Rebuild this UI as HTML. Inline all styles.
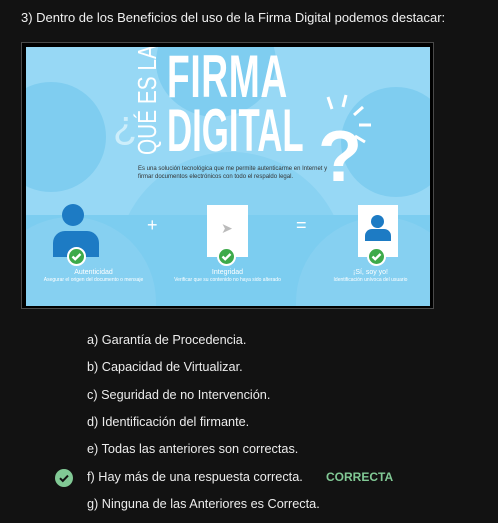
<!DOCTYPE html>
<html><head><meta charset="utf-8"><style>
body{margin:0;width:498px;height:523px;background:#121212;font-family:"Liberation Sans",sans-serif;position:relative;overflow:hidden;color:#e8e8e8}
.a{position:absolute}
.t{left:21px;top:10px;font-size:13px;color:#f0f0f0}
.frame{left:21px;top:42px;width:413px;height:267px;border:1px solid #4a4a4a;background:#000;box-sizing:border-box}
.img{left:26px;top:47px;width:404px;height:259px;background:#97d8f5;overflow:hidden}
.c{position:absolute;border-radius:50%;background:#7fcdf0}
.opt{left:87px;font-size:12.7px;color:#ececec}
.ck{width:19px;height:19px}
</style></head><body>
<div class="a t">3) Dentro de los Beneficios del uso de la Firma Digital podemos destacar:</div>
<div class="a frame"></div>
<div class="a img">
 <div class="c" style="left:-30px;top:35px;width:110px;height:110px"></div>
 <div class="c" style="left:130px;top:-40px;width:120px;height:110px"></div>
 <div class="c" style="left:315px;top:40px;width:110px;height:110px"></div>
 <div class="c" style="left:90px;top:105px;width:230px;height:230px;background:#89d2f2"></div>
 <div class="a" style="left:0;top:168px;width:404px;height:91px;background:#7ccdf0"></div>
 <div class="c" style="left:-40px;top:170px;width:170px;height:170px;background:#86d0f1"></div>
 <div class="c" style="left:270px;top:170px;width:170px;height:170px;background:#86d0f1"></div>
 <div class="a" style="left:141px;top:0px;font-size:60px;font-weight:bold;color:#fff;transform:scaleX(0.62);transform-origin:0 0;letter-spacing:1px;line-height:60px">FIRMA</div>
 <div class="a" style="left:141px;top:56px;font-size:60px;font-weight:bold;color:#fff;transform:scaleX(0.58);transform-origin:0 0;line-height:56px">DIGITAL</div>
 <div class="a" style="left:108px;top:108px;font-size:26px;color:#fff;transform:rotate(-90deg) scaleX(0.8);transform-origin:0 0;white-space:nowrap;line-height:26px">QUÉ ES LA</div>
 <div class="a" style="left:88px;top:60px;font-size:40px;color:#cdeefb;transform:rotate(180deg)">?</div>
 <div class="a" style="left:292px;top:70px;font-size:72px;font-weight:bold;color:#fff;line-height:80px">?</div>
 <svg class="a" style="left:295px;top:40px" width="70" height="70"><g stroke="#fff" stroke-width="3"><line x1="7" y1="10" x2="11" y2="22"/><line x1="25" y1="8" x2="22" y2="20"/><line x1="42" y1="20" x2="33" y2="28"/><line x1="50" y1="38" x2="38" y2="38"/><line x1="44" y1="55" x2="34" y2="49"/></g></svg>
 <div class="a" style="left:112px;top:118px;font-size:6px;color:#333;width:200px;line-height:8px">Es una solución tecnológica que me permite autenticarme en Internet y firmar documentos electrónicos con todo el respaldo legal.</div>
 <div class="a" style="left:36px;top:157px;width:22px;height:22px;border-radius:50%;background:#1d7bc4"></div>
 <div class="a" style="left:27px;top:184px;width:46px;height:26px;border-radius:12px 12px 0 0;background:#1d7bc4"></div>
 <div class="a" style="left:121px;top:168px;font-size:18px;color:#fff">+</div>
 <div class="a" style="left:181px;top:158px;width:41px;height:52px;background:#fff"></div>
 <div class="a" style="left:195px;top:173px;font-size:14px;color:#bbb">➤</div>
 <div class="a" style="left:270px;top:168px;font-size:18px;color:#fff">=</div>
 <div class="a" style="left:332px;top:158px;width:40px;height:52px;background:#fff"></div>
 <div class="a" style="left:345px;top:168px;width:13px;height:13px;border-radius:50%;background:#1d7bc4"></div>
 <div class="a" style="left:339px;top:182px;width:26px;height:12px;border-radius:7px 7px 0 0;background:#1d7bc4"></div>
 <svg class="a ck" style="left:41px;top:200px" viewBox="0 0 19 19"><circle cx="9.5" cy="9.5" r="8.5" fill="#3daa4a" stroke="#fff" stroke-width="2"/><path d="M5.5 9.5l2.7 2.7L13.5 7" stroke="#fff" stroke-width="2.4" fill="none"/></svg>
 <svg class="a ck" style="left:191px;top:200px" viewBox="0 0 19 19"><circle cx="9.5" cy="9.5" r="8.5" fill="#3daa4a" stroke="#fff" stroke-width="2"/><path d="M5.5 9.5l2.7 2.7L13.5 7" stroke="#fff" stroke-width="2.4" fill="none"/></svg>
 <svg class="a ck" style="left:341px;top:200px" viewBox="0 0 19 19"><circle cx="9.5" cy="9.5" r="8.5" fill="#3daa4a" stroke="#fff" stroke-width="2"/><path d="M5.5 9.5l2.7 2.7L13.5 7" stroke="#fff" stroke-width="2.4" fill="none"/></svg>
 <div class="a" style="left:0;top:222px;width:135px;text-align:center;font-size:7px;color:#fff">Autenticidad<br><span style="font-size:5px;line-height:7px">Asegurar el origen del documento o mensaje</span></div>
 <div class="a" style="left:134px;top:222px;width:135px;text-align:center;font-size:7px;color:#fff">Integridad<br><span style="font-size:5px">Verificar que su contenido no haya sido alterado</span></div>
 <div class="a" style="left:282px;top:222px;width:125px;text-align:center;font-size:7px;color:#fff">¡Sí, soy yo!<br><span style="font-size:5px">Identificación unívoca del usuario</span></div>
</div>
<div class="a opt" style="top:333px">a) Garantía de Procedencia.</div>
<div class="a opt" style="top:360px">b) Capacidad de Virtualizar.</div>
<div class="a opt" style="top:388px">c) Seguridad de no Intervención.</div>
<div class="a opt" style="top:415px">d) Identificación del firmante.</div>
<div class="a opt" style="top:442px">e) Todas las anteriores son correctas.</div>
<div class="a opt" style="top:470px">f) Hay más de una respuesta correcta.</div>
<div class="a" style="left:326px;top:470px;font-size:12px;font-weight:bold;color:#81c995">CORRECTA</div>
<div class="a opt" style="top:497px">g) Ninguna de las Anteriores es Correcta.</div>
<svg class="a" style="left:55px;top:469px" width="18" height="18" viewBox="0 0 18 18"><circle cx="9" cy="9" r="9" fill="#81c995"/><path d="M5 9.2l2.8 2.8L13 6.6" stroke="#121212" stroke-width="2" fill="none"/></svg>
</body></html>
